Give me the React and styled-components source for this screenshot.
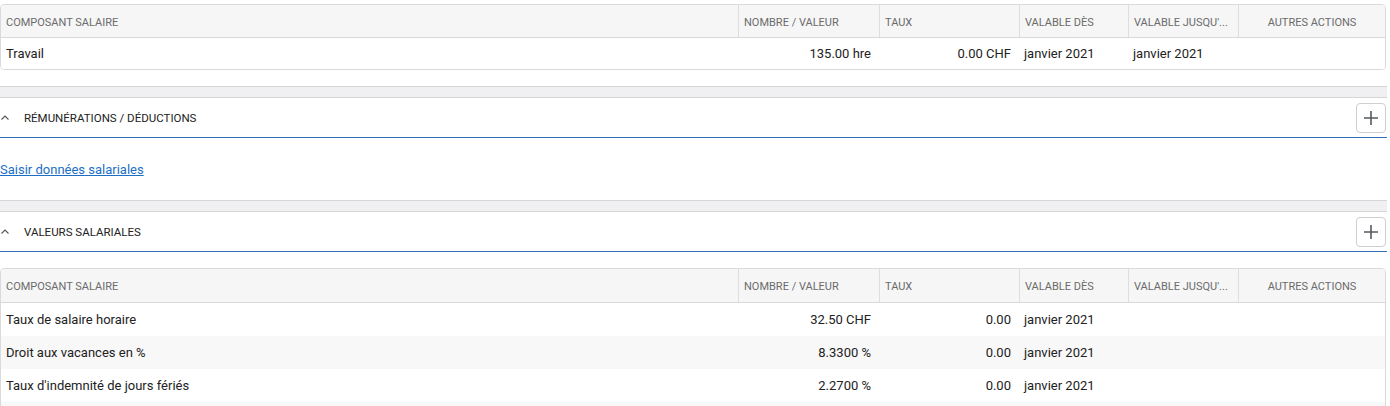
import React from "react";
import styled, { createGlobalStyle } from "styled-components";

const Global = createGlobalStyle`
  html, body { margin: 0; padding: 0; background: #fff; }
  body { font-family: Roboto, "Liberation Sans", Arial, sans-serif; color: #222; }
`;

const Page = styled.div`
  width: 1387px;
  padding-top: 4px;
`;

const COLS = "737px 141px 140px 109px 110px 1fr";

const Table = styled.div`
  width: 1386px;
  box-sizing: border-box;
  border: 1px solid #dadada;
  border-radius: 4px;
  overflow: hidden;
`;

const HeadRow = styled.div`
  display: grid;
  grid-template-columns: ${COLS};
  height: ${(p) => p.$h}px;
  background: #f6f6f6;
  border-bottom: 1px solid #dadada;
`;

const HeadCell = styled.div`
  display: flex;
  align-items: center;
  justify-content: ${(p) => (p.$center ? "center" : "flex-start")};
  padding: 2px 5px 0;
  font-size: 11px;
  color: #6b6b6b;
  text-transform: uppercase;
  white-space: nowrap;
  overflow: hidden;
  border-left: ${(p) => (p.$first ? "none" : "1px solid #dedede")};
`;

const Row = styled.div`
  display: grid;
  grid-template-columns: ${COLS};
  height: ${(p) => p.$h}px;
  background: ${(p) => (p.$alt ? "#f8f8f8" : "#fff")};
`;

const Cell = styled.div`
  display: flex;
  align-items: center;
  justify-content: ${(p) => (p.$right ? "flex-end" : "flex-start")};
  padding: ${(p) => (p.$right ? "0 8px 0 5px" : "0 5px")};
  font-size: 13px;
  color: #222;
  white-space: nowrap;
`;

const Band = styled.div`
  height: 10px;
  background: #f0f0f2;
  border-top: 1px solid #d6d6d6;
  border-bottom: 1px solid #d6d6d6;
  margin-top: ${(p) => p.$mt || 0}px;
`;

const SectionHeader = styled.div`
  display: flex;
  align-items: center;
  height: 39px;
  border-bottom: 1px solid #2f6fb5;
  padding-right: 1px;
  margin-bottom: ${(p) => p.$mb || 0}px;
`;

const Chevron = styled.svg`
  width: 10px;
  height: 7px;
  margin: 0 14px 0 0;
  flex: none;
`;

const Title = styled.span`
  flex: 1;
  font-size: 11.5px;
  color: #222;
  text-transform: uppercase;
`;

const AddButton = styled.button`
  width: 30px;
  height: 30px;
  box-sizing: border-box;
  border: 1px solid #cfcfcf;
  border-radius: 4px;
  background: #fff;
  display: flex;
  align-items: center;
  justify-content: center;
  padding: 0;
  cursor: pointer;
`;

const Content = styled.div`
  height: 62px;
  display: flex;
  align-items: center;
`;

const Link = styled.a`
  font-size: 13px;
  color: #1c6fc4;
  text-decoration: underline;
  cursor: pointer;
`;

const ChevronUp = () => (
  <Chevron viewBox="0 0 10 7">
    <path d="M1.5 5.5 L5 2 L8.5 5.5" fill="none" stroke="#555" strokeWidth="1.1" />
  </Chevron>
);

const Plus = () => (
  <svg width="16" height="16" viewBox="0 0 16 16">
    <path d="M8 1 V15 M1 8 H15" stroke="#555a60" strokeWidth="1.6" fill="none" />
  </svg>
);

const headers = [
  "Composant salaire",
  "Nombre / valeur",
  "Taux",
  "Valable dès",
  "Valable jusqu'...",
  "Autres actions",
];

const Head = ({ h }) => (
  <HeadRow $h={h}>
    {headers.map((t, i) => (
      <HeadCell key={t} $first={i === 0} $center={i === 5}>
        {t}
      </HeadCell>
    ))}
  </HeadRow>
);

const rows2 = [
  ["Taux de salaire horaire", "32.50 CHF", "0.00", "janvier 2021"],
  ["Droit aux vacances en %", "8.3300 %", "0.00", "janvier 2021"],
  ["Taux d'indemnité de jours fériés", "2.2700 %", "0.00", "janvier 2021"],
  ["", "", "", ""],
];

export default function App() {
  return (
    <>
      <Global />
      <Page>
        <Table>
          <Head h={32} />
          <Row $h={31}>
            <Cell>Travail</Cell>
            <Cell $right>135.00 hre</Cell>
            <Cell $right>0.00 CHF</Cell>
            <Cell>janvier 2021</Cell>
            <Cell>janvier 2021</Cell>
            <Cell />
          </Row>
        </Table>

        <Band $mt={16} />
        <SectionHeader>
          <ChevronUp />
          <Title>Rémunérations / Déductions</Title>
          <AddButton aria-label="Ajouter">
            <Plus />
          </AddButton>
        </SectionHeader>
        <Content>
          <Link>Saisir données salariales</Link>
        </Content>

        <Band />
        <SectionHeader $mb={16}>
          <ChevronUp />
          <Title>Valeurs salariales</Title>
          <AddButton aria-label="Ajouter">
            <Plus />
          </AddButton>
        </SectionHeader>

        <Table>
          <Head h={33} />
          {rows2.map((r, i) => (
            <Row key={i} $h={33} $alt={i % 2 === 1}>
              <Cell>{r[0]}</Cell>
              <Cell $right>{r[1]}</Cell>
              <Cell $right>{r[2]}</Cell>
              <Cell>{r[3]}</Cell>
              <Cell />
              <Cell />
            </Row>
          ))}
        </Table>
      </Page>
    </>
  );
}
